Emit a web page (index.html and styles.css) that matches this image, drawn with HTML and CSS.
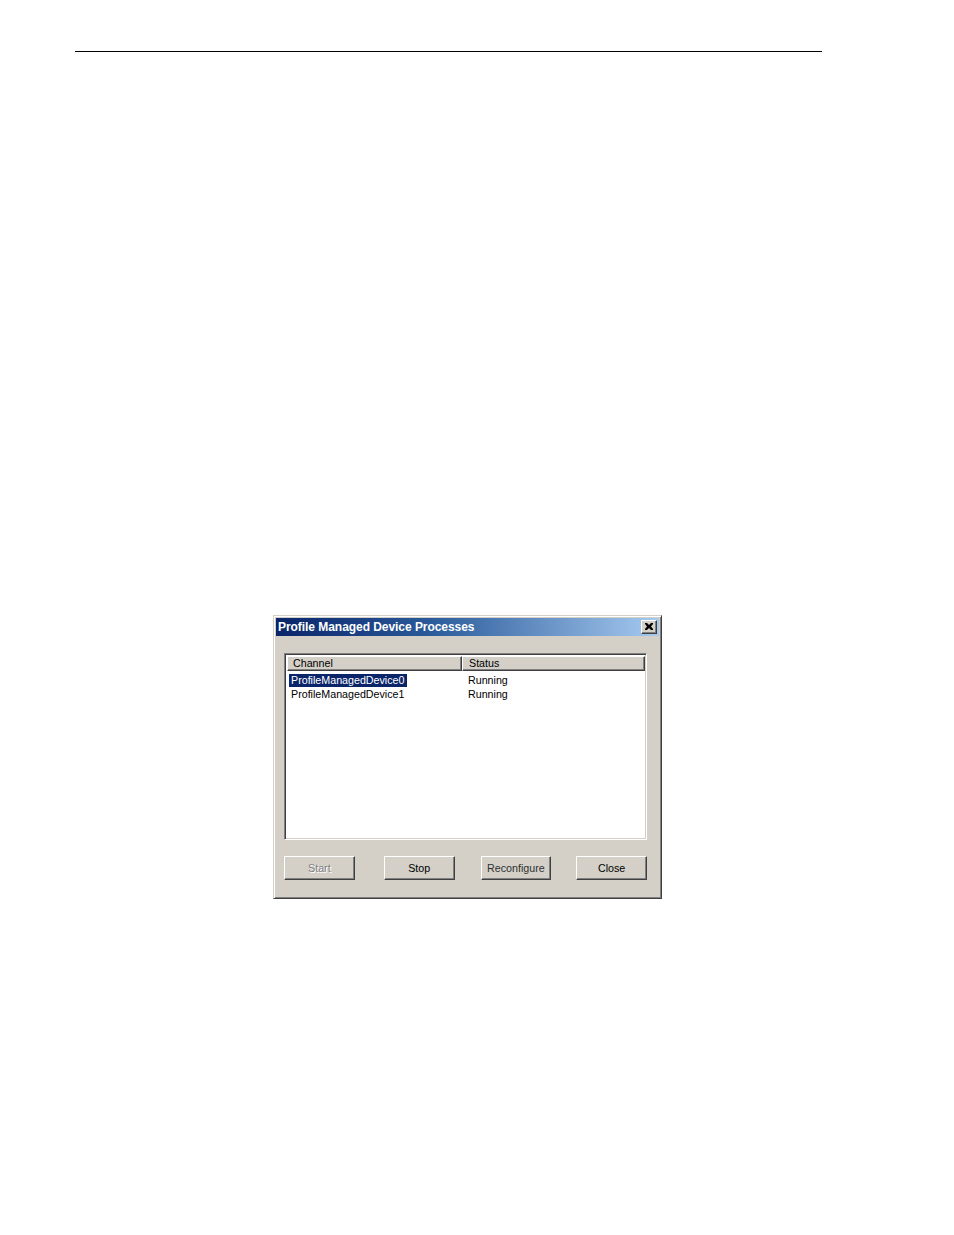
FILE: index.html
```html
<!DOCTYPE html>
<html>
<head>
<meta charset="utf-8">
<link rel="stylesheet" href="styles.css">
</head>
<body>
<div class="page">
  <div class="rule"></div>
  <div class="dialog">
    <div class="titlebar">
      <span class="title">Profile Managed Device Processes</span>
      <div class="xbtn">
        <svg width="8" height="7" viewBox="0 0 8 7"><path d="M0 0h2l2 2 2-2h2v1L6 3.5 8 6v1H6L4 5 2 7H0V6l2-2.5L0 1z" fill="#000"/></svg>
      </div>
    </div>
    <div class="body">
      <div class="list">
        <div class="lhead">
          <div class="hcol c1">Channel</div>
          <div class="hcol c2">Status</div>
        </div>
        <div class="row">
          <div class="cell c1"><span class="sel">ProfileManagedDevice0</span></div>
          <div class="cell c2">Running</div>
        </div>
        <div class="row">
          <div class="cell c1"><span class="plain">ProfileManagedDevice1</span></div>
          <div class="cell c2">Running</div>
        </div>
      </div>
      <div class="buttons">
        <div class="btn disabled">Start</div>
        <div class="btn b2">Stop</div>
        <div class="btn b3 soft">Reconfigure</div>
        <div class="btn b4">Close</div>
      </div>
    </div>
  </div>
</div>
</body>
</html>
```

FILE: styles.css
```css
html, body {
  margin: 0;
  padding: 0;
  background: #fff;
}
.page {
  width: 954px;
  height: 1235px;
  padding-top: 51px;
  box-sizing: border-box;
  font-family: "Liberation Sans", Arial, sans-serif;
}
.rule {
  margin-left: 75px;
  width: 747px;
  height: 1px;
  background: #000;
}
.dialog {
  margin-left: 273px;
  margin-top: 563px;
  width: 389px;
  height: 284px;
  box-sizing: border-box;
  background: #d4d0c8;
  border-top: 1px solid #d4d0c8;
  border-left: 1px solid #d4d0c8;
  border-right: 1px solid #404040;
  border-bottom: 1px solid #404040;
  box-shadow: inset 1px 1px 0 #fff, inset -1px -1px 0 #808080;
  padding: 2px;
  display: flex;
  flex-direction: column;
}
.titlebar {
  height: 18px;
  background: linear-gradient(to right, #0a246a 0%, #2a5a9a 40%, #a6caf0 100%);
  display: flex;
  align-items: center;
  justify-content: space-between;
  padding: 0 2px 0 2px;
}
.title {
  color: #fff;
  font-weight: bold;
  font-size: 12px;
  letter-spacing: -0.05px;
  line-height: 18px;
}
.xbtn {
  width: 16px;
  height: 14px;
  box-sizing: border-box;
  background: #d4d0c8;
  border-top: 1px solid #fff;
  border-left: 1px solid #fff;
  border-right: 1px solid #404040;
  border-bottom: 1px solid #404040;
  box-shadow: inset -1px -1px 0 #808080;
  display: flex;
  align-items: center;
  justify-content: center;
  padding: 0 1px 1px 0;
}
.xbtn svg { display: block; }
.body {
  flex: 1;
  padding: 17px 12px 16px 8px;
  display: flex;
  flex-direction: column;
}
.list {
  height: 187px;
  box-sizing: border-box;
  background: #fff;
  border-top: 1px solid #808080;
  border-left: 1px solid #808080;
  border-right: 1px solid #fff;
  border-bottom: 1px solid #fff;
  box-shadow: inset 1px 1px 0 #404040, inset -1px -1px 0 #d4d0c8;
  padding: 2px 2px 2px 2px;
}
.lhead {
  display: flex;
  height: 15px;
  width: 359px;
}
.hcol {
  box-sizing: border-box;
  height: 15px;
  background: #d4d0c8;
  border-top: 1px solid #fff;
  border-left: 1px solid #fff;
  border-right: 1px solid #404040;
  border-bottom: 1px solid #404040;
  box-shadow: inset -1px -1px 0 #808080;
  font-size: 10.7px;
  line-height: 13px;
  color: #000;
  padding-left: 5px;
}
.hcol.c1 { width: 175px; }
.hcol.c2 { width: 183px; padding-left: 6px; }
.row {
  display: flex;
  height: 14px;
  font-size: 10.7px;
  line-height: 13px;
  color: #000;
}
.lhead + .row { margin-top: 3px; }
.cell.c1 { width: 179px; padding-left: 2px; }
.cell.c2 { padding-left: 0; }
.sel {
  display: inline-block;
  background: #0a246a;
  color: #fff;
  padding: 0 3px 0 2px;
  height: 13px;
}
.plain {
  display: inline-block;
  padding: 0 3px 0 2px;
}
.buttons {
  margin-top: 16px;
  display: flex;
}
.btn {
  width: 71px;
  height: 24px;
  box-sizing: border-box;
  background: #d4d0c8;
  border-top: 1px solid #fff;
  border-left: 1px solid #fff;
  border-right: 1px solid #404040;
  border-bottom: 1px solid #404040;
  box-shadow: inset -1px -1px 0 #808080;
  font-size: 10.7px;
  color: #000;
  display: flex;
  align-items: center;
  justify-content: center;
  padding-bottom: 1px;
}
.btn.b2 { margin-left: 29px; }
.btn.b3 { margin-left: 26px; }
.btn.b4 { margin-left: 25px; }
.btn.disabled {
  color: #808080;
  text-shadow: 1px 1px 0 #fff;
}
.btn.soft {
  color: #303030;
}
```
